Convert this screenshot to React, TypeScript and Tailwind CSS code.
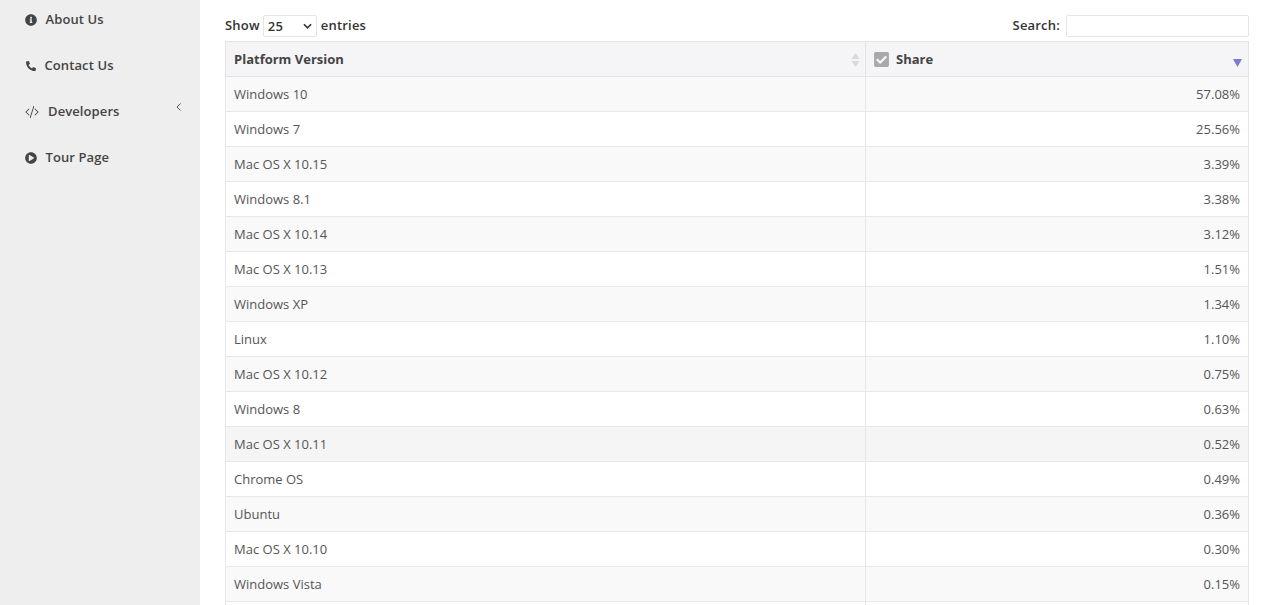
import { FaCheckSquare, FaInfoCircle, FaPhoneAlt, FaPlayCircle } from "react-icons/fa";
import { BsCodeSlash } from "react-icons/bs";

const ROWS: [string, string][] = [
  ["Windows 10", "57.08%"],
  ["Windows 7", "25.56%"],
  ["Mac OS X 10.15", "3.39%"],
  ["Windows 8.1", "3.38%"],
  ["Mac OS X 10.14", "3.12%"],
  ["Mac OS X 10.13", "1.51%"],
  ["Windows XP", "1.34%"],
  ["Linux", "1.10%"],
  ["Mac OS X 10.12", "0.75%"],
  ["Windows 8", "0.63%"],
  ["Mac OS X 10.11", "0.52%"],
  ["Chrome OS", "0.49%"],
  ["Ubuntu", "0.36%"],
  ["Mac OS X 10.10", "0.30%"],
  ["Windows Vista", "0.15%"],
  ["", ""],
];

function SideItem({ icon, label, gap, caret }: { icon: React.ReactNode; label: string; gap: string; caret?: boolean }) {
  return (
    <li className="relative flex h-[46px] items-center pl-[25px] text-[13px] font-semibold tracking-[0.1px] text-[#444]">
      <span className="flex w-3 shrink-0 items-center justify-center text-[#444]">{icon}</span>
      <span className={gap}>{label}</span>
      {caret && (
        <svg viewBox="0 0 5 8" className="absolute left-[176px] top-[14px] h-[8px] w-[5px]">
          <path d="M4.5 .5L1 4l3.5 3.5" fill="none" stroke="#555" strokeWidth="1" />
        </svg>
      )}
    </li>
  );
}

export default function App() {
  return (
    <div className="flex h-[605px] overflow-hidden bg-white font-['Open_Sans',sans-serif] text-[13px] text-[#555]">
      <aside className="w-[200px] shrink-0 bg-[#eeeeee]">
        <ul className="-mt-[3px]">
          <SideItem icon={<FaInfoCircle className="text-[12px]" />} label="About Us" gap="ml-[8.5px]" />
          <SideItem icon={<FaPhoneAlt className="text-[10px]" />} label="Contact Us" gap="ml-[7.5px]" />
          <SideItem icon={<BsCodeSlash className="ml-[1px] shrink-0 text-[14px]" />} label="Developers" gap="ml-[11px]" caret />
          <SideItem icon={<FaPlayCircle className="text-[12px]" />} label="Tour Page" gap="ml-[8.5px]" />
        </ul>
      </aside>

      <main className="min-w-0 flex-1 pl-[25px] pr-[27px] pt-[14px]">
        <div className="flex h-[27px] items-start justify-between font-semibold tracking-[0.2px] text-[#333]">
          <label className="flex h-[23px] items-center">
            Show
            <span className="relative ml-[3px] mr-[4px] block h-[22px] w-[54px] rounded-[2px] border border-[#e5e5e5] bg-white pl-[4px] leading-[20px]">
              25
              <svg viewBox="0 0 10 6" className="absolute right-[4px] top-[7px] h-[6px] w-[9px]">
                <path d="M1 1l4 4 4-4" fill="none" stroke="#333" strokeWidth="1.8" />
              </svg>
            </span>
            entries
          </label>
          <label className="flex h-[23px] items-center">
            Search:
            <input className="ml-[6px] h-[22px] w-[183px] rounded-[2px] border border-[#e5e5e5] bg-white outline-none" />
          </label>
        </div>

        <table className="w-[1024px] table-fixed border-collapse border border-[#e3e3e3]">
          <colgroup>
            <col className="w-[640px]" />
            <col />
          </colgroup>
          <thead>
            <tr className="h-[35px] bg-[#f5f5f7] font-bold text-[#444]">
              <th className="relative border border-[#e3e3e3] px-2 pt-[2px] text-left font-bold">
                Platform Version
                <svg viewBox="0 0 8 14" className="absolute right-[5px] top-[11px] h-[14px] w-[9px]">
                  <path d="M4 0l4 6H0zM4 14L0 8h8z" fill="#d9d9db" />
                </svg>
              </th>
              <th className="relative border border-[#e3e3e3] px-2 text-left font-bold">
                <span className="flex items-center">
                  <FaCheckSquare className="mr-[6px] -ml-[1px] text-[17px] text-[#a9a9a9]" />
                  <span className="pt-[1px]">Share</span>
                </span>
                <svg viewBox="0 0 9 8" className="absolute right-[6px] top-[17px] h-[8px] w-[9px]">
                  <path d="M0 0h9L4.5 8z" fill="#7a7ad4" />
                </svg>
              </th>
            </tr>
          </thead>
          <tbody>
            {ROWS.map(([name, share], i) => (
              <tr key={i} className={`h-[35px] ${name === "Mac OS X 10.11" ? "bg-[#f5f5f5]" : i % 2 === 0 ? "bg-[#f9f9f9]" : "bg-white"}`}>
                <td className="border border-[#e8e8e8] px-2 pt-[2px]">{name}</td>
                <td className="border border-[#e8e8e8] px-2 pt-[2px] text-right">{share}</td>
              </tr>
            ))}
          </tbody>
        </table>
      </main>
    </div>
  );
}
